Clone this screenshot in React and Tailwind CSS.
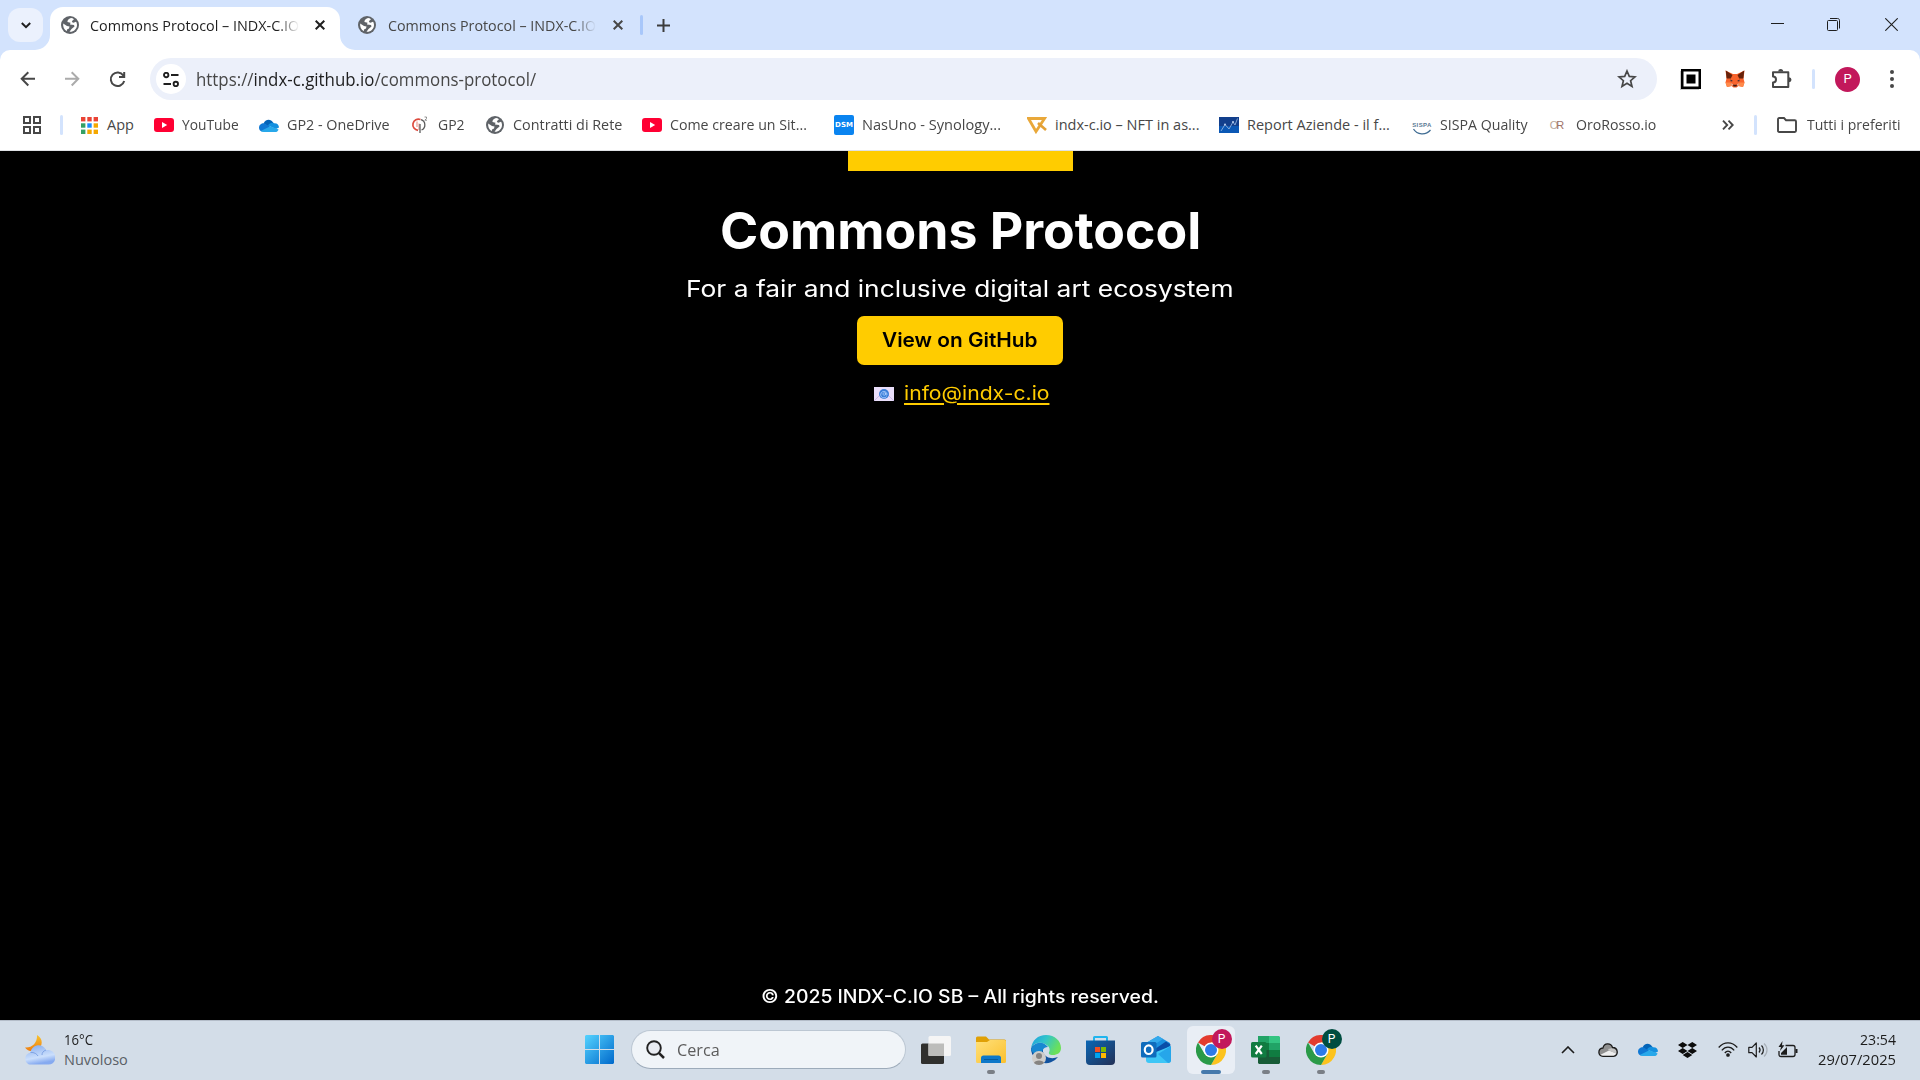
import React, { useLayoutEffect, useRef, useState } from "react";

// Stretches a single line of text to the width of its box.
function Fit({ children, className = "" }) {
  const box = useRef(null);
  const line = useRef(null);
  const [scale, setScale] = useState(1);
  useLayoutEffect(() => {
    setScale(box.current.offsetWidth / line.current.offsetWidth);
  }, [children]);
  return (
    <span ref={box} className={`block shrink-0 whitespace-nowrap ${className}`}>
      <span ref={line} className="inline-block origin-left" style={{ transform: `scaleX(${scale})` }}>
        {children}
      </span>
    </span>
  );
}

const Globe = () => (
  <svg viewBox="0 0 18 18" className="size-[18px]">
    <circle cx="9" cy="9" r="9" fill="#5f6368" />
    <path
      fill="#fff"
      d="M10 2C7.500 3 6 4.500 6.500 6L9.500 6.800L9 8.500L13 9L13.500 10.500L10.500 13L8.500 15.800C12.500 16.200 16 13 16 9C16 7.500 15.500 6.500 15 5.800L12.500 6.800L10.800 6L11.500 4.500L13 3.200C12 2.400 11 2 10 2ZM2.200 7.400L6 10L8.500 10.500L8 12.500L6 13.500L5.800 15.200C3 13.500 1.800 10.500 2.200 7.400Z"
    />
  </svg>
);

const YouTube = () => (
  <svg viewBox="0 0 20 14" className="w-5 h-3.5">
    <rect width="20" height="14" rx="3" fill="#ff0033" />
    <path d="M8 4L13.200 7L8 10Z" fill="#fff" />
  </svg>
);

const OneDrive = () => (
  <svg viewBox="0 0 20 13" className="w-5 h-[13px]">
    <path d="M4.500 4.500C6 .5 11.500-1 14.300 3.800L10 8Z" fill="#0364b8" />
    <path d="M0 8.700C0 5.500 3 3.800 5.300 4.300L13 9L3 12.500C1.200 12 0 10.500 0 8.700Z" fill="#0f78d4" />
    <path d="M9 6.500C10.500 4 13 3.300 15.200 4.300C18.500 4.200 20 6.400 20 8.500L17 10Z" fill="#1490df" />
    <path d="M1.800 11.900L11.300 7.300L19.600 10.400C19 12 17.800 13 16 13H4.600C3.500 13 2.500 12.600 1.800 11.900Z" fill="#28a8ea" />
  </svg>
);

const Apps = () => (
  <svg viewBox="0 0 17 17" className="size-[17px]">
    {["#ea4335", "#ea4335", "#ea4335", "#34a065", "#1a8cff", "#f5a800", "#34a065", "#f5a800", "#f5a800"].map((c, i) => (
      <rect key={i} x={(i % 3) * 6.3} y={Math.floor(i / 3) * 6.3} width="4.400" height="4.400" fill={c} />
    ))}
  </svg>
);

const Gp2 = () => (
  <svg viewBox="0 0 18 18" className="size-[18px]" fill="none">
    <path d="M9.500 3.500A5.600 5.600 0 1 0 7 14.300" stroke="#dd4b3e" strokeWidth="1.700" />
    <path d="M6 5.500V11M8 7.500V14" stroke="#e4887e" strokeWidth="1" />
    <path d="M10 3.700A5.500 5.500 0 0 1 10.500 14M9 8V17" stroke="#5c5c5c" strokeWidth="1.300" />
    <path d="M13.500 1H15.500V2.500L13.800 4.200H16" stroke="#777" strokeWidth=".8" />
  </svg>
);

const Dsm = () => (
  <span className="flex size-5 items-center justify-center rounded-[2px] bg-[#0a84f0] font-['DejaVu_Sans'] text-[7px] font-bold tracking-[0px] text-white">
    DSM
  </span>
);

const Indx = () => (
  <svg viewBox="0 0 20 17" className="w-5 h-[17px]" fill="none">
    <path d="M1.500 1.500H17.500L9 14.500Z" stroke="#e9a83a" strokeWidth="2.800" />
    <path d="M11 6L19 13" stroke="#e3a035" strokeWidth="2.600" />
  </svg>
);

const Report = () => (
  <svg viewBox="0 0 20 16" className="w-5 h-4" fill="none">
    <rect width="20" height="16" fill="#123f8c" />
    <path d="M0 9H20V16H0Z" fill="#0b58b5" />
    <path d="M2 14L6 7.500L10 12L14 5L16 8L18.500 1.500" stroke="#8fb0de" strokeWidth=".9" />
    <circle cx="6" cy="7.500" r="1" fill="#b9cfee" />
    <circle cx="14" cy="5" r="1" fill="#b9cfee" />
  </svg>
);

const Sispa = () => (
  <span className="relative flex h-5 w-5 flex-col items-center pt-[7px]">
    <span className="font-['Liberation_Sans'] text-[6px] font-bold leading-[6px] tracking-[0.4px] text-[#5b7a94]">SISPA</span>
    <svg viewBox="0 0 20 7" className="h-[7px] w-5" fill="none">
      <path d="M1.500 1C5 7 14 7.500 18.500 2" stroke="#3f6c93" strokeWidth="1.200" />
    </svg>
  </span>
);

const Oro = () => (
  <span className="pr-1 font-['Liberation_Sans'] text-[11px] leading-none tracking-[-2px] text-[#a07268]">
    <span className="text-[#c0aa98]">O</span>R
  </span>
);

const bookmarks = [
  { icon: Apps, label: "App", slot: "w-[75px]", text: "w-[27px]" },
  { icon: YouTube, label: "YouTube", slot: "w-[105px]", text: "w-[57px]" },
  { icon: OneDrive, label: "GP2 - OneDrive", slot: "w-[151px]", text: "w-[103px]" },
  { icon: Gp2, label: "GP2", slot: "w-[75px]", text: "w-[27px]" },
  { icon: Globe, label: "Contratti di Rete", slot: "w-[157px]", text: "w-[109px]" },
  { icon: YouTube, label: "Come creare un Sit...", slot: "w-[192px]", text: "w-[137px]" },
  { icon: Dsm, label: "NasUno - Synology...", slot: "w-[193px]", text: "w-[139px]" },
  { icon: Indx, label: "indx-c.io – NFT in as...", slot: "w-[192px]", text: "w-[144px]" },
  { icon: Report, label: "Report Aziende - il f...", slot: "w-[193px]", text: "w-[143px]" },
  { icon: Sispa, label: "SISPA Quality", slot: "w-[136px]", text: "w-[88px]" },
  { icon: Oro, label: "OroRosso.io", slot: "w-[173px]", text: "w-[80px]" },
];

const Cross = ({ color }) => (
  <svg viewBox="0 0 10 10" className="size-2.5 shrink-0">
    <path d="M.7.700L9.300 9.300M9.300.700L.7 9.300" stroke={color} strokeWidth="2" />
  </svg>
);

function TabStrip() {
  return (
    <header className="flex h-[50px] items-start bg-[#d3e3fd]">
      <div className="ml-2 mt-2 flex h-[34px] w-[35px] items-center justify-center rounded-xl bg-[#ebf1fd]">
        <svg viewBox="0 0 10 7" className="h-[7px] w-2.5" fill="none">
          <path d="M.8 1L5 5.200L9.200 1" stroke="#1f1f1f" strokeWidth="2" />
        </svg>
      </div>
      <div className="relative ml-[7px] mt-[7px] flex h-[43px] w-[290px] items-center rounded-t-[13px] bg-white pb-[7px] pl-[11px]">
        <svg viewBox="0 0 15 15" className="absolute bottom-0 -left-[15px] size-[15px]">
          <path d="M15 0V15H0A15 15 0 0 0 15 0Z" fill="#fff" />
        </svg>
        <svg viewBox="0 0 15 15" className="absolute bottom-0 -right-[15px] size-[15px]">
          <path d="M0 0V15H15A15 15 0 0 1 0 0Z" fill="#fff" />
        </svg>
        <Globe />
        <Fit className="ml-[11px] w-[209px] pt-px text-[14.5px] text-[#1f1f1f] [mask-image:linear-gradient(to_right,#000_90%,transparent)]">
          Commons Protocol – INDX-C.IO
        </Fit>
        <span className="ml-[16px]">
          <Cross color="#1f1f1f" />
        </span>
      </div>
      <div className="mt-[7px] flex h-9 items-center pl-[18px]">
        <Globe />
        <Fit className="ml-[12px] w-[208px] pt-px text-[14.5px] text-[#474747] [mask-image:linear-gradient(to_right,#000_90%,transparent)]">
          Commons Protocol – INDX-C.IO
        </Fit>
        <span className="ml-[17px]">
          <Cross color="#474747" />
        </span>
        <span className="ml-[17px] h-5 w-[3px] rounded bg-[#a8c7fa]" />
        <svg viewBox="0 0 13 13" className="ml-[14px] size-[13px]">
          <path d="M6.500 0V13M0 6.500H13" stroke="#3c3c3c" strokeWidth="2" />
        </svg>
      </div>
      <div className="ml-auto mr-[22px] flex h-[49px] items-center text-[#1f1f1f]">
        <svg viewBox="0 0 13 13" className="size-[13px]">
          <path d="M0 5.500H13" stroke="currentColor" />
        </svg>
        <svg viewBox="0 0 14 14" className="ml-[43px] size-[14px]" fill="none" stroke="currentColor">
          <rect x=".5" y="2.500" width="10" height="10" rx="1" />
          <path d="M3 .5H10.500C12 .5 12.500 1.500 12.500 2.500V10.500" />
        </svg>
        <svg viewBox="0 0 13 13" className="ml-11 size-[13px]">
          <path d="M.3.300L12.700 12.700M12.700.300L.3 12.700" stroke="currentColor" strokeWidth="1.100" />
        </svg>
      </div>
    </header>
  );
}

const Puzzle = () => (
  <svg viewBox="0 0 22 22" className="size-[22px]" fill="none">
    <path d="M2 4.200H17.300V19H2V14.600A3 3 0 0 0 2 8.600Z" stroke="#474747" strokeWidth="2" strokeLinejoin="round" />
    <path d="M7.200 3.500A2.500 2.500 0 0 1 12.200 3.500ZM18 9.200A2.500 2.500 0 0 1 18 14.200Z" fill="#474747" />
  </svg>
);

const Fox = () => (
  <svg viewBox="0 0 20 18" className="h-[18px] w-5">
    <path d="M.5.500L8 4H12L19.500.500L18.500 8.500L19.500 12.500L18 17L13.500 16L11.500 17.500H8.500L6.500 16L2 17L.5 12.500L1.500 8.500Z" fill="#f8632c" />
    <path d="M.8.600L7.500 5L5.800 8.500L1.600 8.600ZM19.200.600L12.500 5L14.200 8.500L18.400 8.600Z" fill="#66210a" />
    <path d="M2 17L.5 12.500H5.500L6.500 16ZM18 17L19.500 12.500H14.500L13.500 16Z" fill="#ff8a4a" />
    <path d="M5.300 9.500L8 11L5.800 11.600ZM14.700 9.500L12 11L14.200 11.600Z" fill="#2b2b38" />
    <path d="M8 14.800H12L11.500 16.500H8.500Z" fill="#3a1c16" />
    <path d="M6.500 13L8 14.800L6.500 16ZM13.500 13L12 14.800L13.500 16Z" fill="#e3c9bd" />
  </svg>
);

function Toolbar() {
  return (
    <div className="bg-[#d3e3fd]">
      <div className="flex h-[50px] items-center rounded-t-[10px] bg-white pt-2">
        <svg viewBox="0 0 16 16" className="ml-5 size-4" fill="none">
          <path d="M8.300 1.200L1.700 7.800L8.300 14.500M2 7.800H15" stroke="#474747" strokeWidth="2" />
        </svg>
        <svg viewBox="0 0 16 16" className="ml-7 size-4" fill="none">
          <path d="M7.700 1.200L14.300 7.800L7.700 14.500M14 7.800H1" stroke="#ababab" strokeWidth="2" />
        </svg>
        <svg viewBox="0 0 17 17" className="ml-[29px] size-[17px]" fill="none">
          <path d="M14.300 4.500A6.800 6.800 0 1 0 15.200 10M15.200 1V6H10" stroke="#474747" strokeWidth="2" />
        </svg>
        <div className="ml-6 flex h-[42px] w-[1507px] items-center rounded-full bg-[#ecf0fa] pl-1.5">
          <span className="flex size-[30px] items-center justify-center rounded-full bg-white">
            <svg viewBox="0 0 16 15" className="h-[15px] w-4" fill="none" stroke="#1f1f1f" strokeWidth="1.900">
              <circle cx="3.200" cy="3" r="2.200" />
              <circle cx="12.800" cy="12" r="2.200" />
              <path d="M8 3H15.500M.5 12H8" />
            </svg>
          </span>
          <Fit className="ml-[10px] w-[340px] pt-px text-[18px] text-[#474747]">
            https://<span className="text-[#1f1f1f]">indx-c.github.io</span>/commons-protocol/
          </Fit>
          <svg viewBox="0 0 20 20" className="ml-auto mr-[20px] size-5" fill="none">
            <path d="M10 2L12.300 7.400L18 7.900L13.600 11.700L15 17.400L10 14.300L5 17.400L6.400 11.700L2 7.900L7.700 7.400Z" stroke="#474747" strokeWidth="1.700" />
          </svg>
        </div>
        <svg viewBox="0 0 21 21" className="ml-[23px] size-[21px]">
          <path d="M0 2H19V21H0Z" fill="#c9c9c9" />
          <rect x="1" y="0" width="20" height="20" fill="#000" />
          <rect x="3.500" y="2.500" width="15" height="15" fill="#fff" />
          <rect x="6.500" y="5.500" width="9" height="9" fill="#000" />
        </svg>
        <span className="ml-6">
          <Fox />
        </span>
        <span className="ml-[26px]">
          <Puzzle />
        </span>
        <span className="ml-[19px] h-5 w-[3px] rounded bg-[#d3e3fd]" />
        <span className="ml-5 flex size-[25px] items-center justify-center rounded-full bg-[#c2185b] font-['Roboto'] text-[13px] text-white">P</span>
        <svg viewBox="0 0 4 18" className="ml-[30px] h-[18px] w-1" fill="#474747">
          <circle cx="2" cy="2" r="2" />
          <circle cx="2" cy="9" r="2" />
          <circle cx="2" cy="16" r="2" />
        </svg>
      </div>
    </div>
  );
}

function BookmarksBar() {
  return (
    <nav className="flex h-[51px] items-center border-b border-[#dfe1e5] bg-white text-[14.5px] text-[#474747]">
      <svg viewBox="0 0 18 18" className="ml-[23px] size-[18px]" fill="none" stroke="#474747" strokeWidth="2">
        <path d="M1 1H7V7H1ZM11 1H17V7H11ZM1 11H7V17H1ZM11 11H17V17H11Z" />
      </svg>
      <span className="ml-[19px] mr-[16px] h-5 w-[3px] rounded bg-[#d3e3fd]" />
      {bookmarks.map(({ icon: Icon, label, slot, text }) => (
        <div key={label} className={`flex shrink-0 items-center ${slot}`}>
          <span className="mr-2 flex size-5 shrink-0 items-center justify-center">
            <Icon />
          </span>
          <Fit className={`pb-px ${text}`}>{label}</Fit>
        </div>
      ))}
      <svg viewBox="0 0 12 10" className="ml-px h-2.5 w-3" fill="none" stroke="#474747" strokeWidth="1.900">
        <path d="M1 .7L5.200 5L1 9.300M6.500.700L10.700 5L6.500 9.300" />
      </svg>
      <span className="ml-[20px] h-5 w-[3px] rounded bg-[#d3e3fd]" />
      <svg viewBox="0 0 20 16" className="ml-5 h-4 w-5" fill="none">
        <path d="M1 2.200Q1 1 2.200 1H7L9 3.200H17.800Q19 3.200 19 4.400V13.800Q19 15 17.800 15H2.200Q1 15 1 13.800Z" stroke="#474747" strokeWidth="1.900" />
      </svg>
      <Fit className="ml-[10px] w-[93px] pb-px">Tutti i preferiti</Fit>
    </nav>
  );
}

function Page() {
  return (
    <main className="flex h-[869px] flex-col items-center bg-black font-['Inter',sans-serif] text-white">
      <div className="h-5 w-[225px] bg-[#ffcc00]" />
      <h1 className="mt-[29px] text-[51px] font-bold leading-[62px]">
        <Fit className="w-[481px]">Commons Protocol</Fit>
      </h1>
      <p className="mt-[10px] text-[23px] leading-[34px]">
        <Fit className="w-[548px]">For a fair and inclusive digital art ecosystem</Fit>
      </p>
      <a className="mt-2.5 flex h-[49px] w-[206px] items-center justify-center rounded-[7px] bg-[#ffcc00] pb-px text-[20px] font-semibold text-black">
        <Fit className="w-[156px]">View on GitHub</Fit>
      </a>
      <div className="mt-[15px] flex h-[28px] items-center pl-1">
        <svg viewBox="0 0 20 14" className="w-5 h-3.5">
          <rect width="20" height="14" fill="#e9defa" />
          <path d="M0 14L7 7M20 14L13 7" stroke="#cdbbe8" />
          <circle cx="10" cy="7" r="5" fill="#3b7fd9" />
          <path d="M12.500 9.500A3.200 3.200 0 1 1 13 7C13 8.600 11.600 8.500 11.600 7.500V5.500" stroke="#b8d4ff" strokeWidth=".8" fill="none" />
          <circle cx="10.200" cy="7" r="1.300" stroke="#b8d4ff" strokeWidth=".7" fill="none" />
        </svg>
        <Fit className="ml-2.5 w-[146px] text-[19px] leading-[28px] text-[#ffcc00]">
          <span className="underline decoration-[1.500px] underline-offset-[3px]">info@indx-c.io</span>
        </Fit>
      </div>
      <footer className="mb-[11px] mt-auto text-[18px] font-medium leading-6">
        <Fit className="w-[398px]">© 2025 INDX-C.IO SB – All rights reserved.</Fit>
      </footer>
    </main>
  );
}

const Weather = () => (
  <svg viewBox="0 0 30 30" className="size-[30px]">
    <defs>
      <linearGradient id="moon" x1="0" y1="0" x2="0" y2="1">
        <stop offset="0" stopColor="#f8c32c" />
        <stop offset="1" stopColor="#ee7d12" />
      </linearGradient>
      <linearGradient id="cloud" x1="0" y1="0" x2=".3" y2="1">
        <stop offset="0" stopColor="#84abee" />
        <stop offset=".7" stopColor="#cbdffc" />
        <stop offset="1" stopColor="#86aaf0" />
      </linearGradient>
    </defs>
    <path d="M12 0C18 3 19 12 11 15.500C7 17 2 16 0 12.500C7 13 12.500 8 12 0Z" fill="url(#moon)" />
    <path d="M6 29.500C-1 29.500-2 19 5.500 17.500C6.500 9 18 7.500 21 15C33 13.500 33 29.500 23.500 29.500Z" fill="url(#cloud)" />
    <path d="M5.500 17.500C9 17 12 19 13 21M21 15C18 16 17 18 17 20" stroke="#7fa3e4" fill="none" />
  </svg>
);

const Windows = () => (
  <svg viewBox="0 0 29 29" className="size-[29px]">
    <linearGradient id="win" x1="0" y1="0" x2="29" y2="29" gradientUnits="userSpaceOnUse">
      <stop offset="0" stopColor="#55d3ff" />
      <stop offset="1" stopColor="#0069cb" />
    </linearGradient>
    <path d="M1 0H14V14H0V1ZM15 0H28L29 1V14H15ZM0 15H14V29H1L0 28ZM15 15H29V28L28 29H15Z" fill="url(#win)" />
  </svg>
);

const TaskView = () => (
  <svg viewBox="0 0 30 28" className="h-7 w-[30px]">
    <rect x="0" y="7.500" width="23" height="20.500" rx="1.500" fill="#30302e" />
    <rect x="7.500" y="0" width="22.500" height="20" rx="1.500" fill="#f5f5f5" />
    <path d="M7.500 7.500H23V20H7.500Z" fill="#bdbdbb" />
  </svg>
);

const Explorer = () => (
  <svg viewBox="0 0 30 28" className="h-7 w-[30px]">
    <linearGradient id="fold" x1="0" y1="0" x2="1" y2="1">
      <stop offset="0" stopColor="#ffe07a" />
      <stop offset="1" stopColor="#fbc02d" />
    </linearGradient>
    <path d="M0 2Q0 .5 1.500.500H10L13 3.500H28.500Q30 3.500 30 5V10H0Z" fill="#e0a005" />
    <path d="M0 6H11L14 4H28.500Q30 4 30 5.500V25.500Q30 27 28.500 27H1.500Q0 27 0 25.500Z" fill="url(#fold)" />
    <path d="M5 27V22Q5 19.500 7.500 19.500H22.500Q25 19.500 25 22V27Z" fill="#0e78c9" />
    <path d="M8 23.500H22" stroke="#075a9c" strokeWidth="1" />
  </svg>
);

const Edge = () => (
  <svg viewBox="0 0 30 30" className="size-[30px]">
    <defs>
      <linearGradient id="edgeTop" x1="0" y1="0" x2="1" y2=".4">
        <stop offset="0" stopColor="#1b9de2" />
        <stop offset=".5" stopColor="#32c5c9" />
        <stop offset="1" stopColor="#6be05a" />
      </linearGradient>
    </defs>
    <path d="M27 22A15 15 0 0 1 0 15C0 9 8 8 12 10L12 17C15 24 22 24 27 22Z" fill="#10529f" />
    <path d="M0 14C1 5 7 0 15 0C24 0 30 6 30 13C30 18 26 20 22 20C18 20 17 18.500 18.500 16C19.500 12 16 9.500 11 8C6 7 1 10 0 14Z" fill="url(#edgeTop)" />
    <path d="M0 15C2 7 12 5 17 12C12 12 10 17 11 21C6 20 2 19 0 15Z" fill="#1788d1" />
    <circle cx="8" cy="23" r="7" fill="#cfcdca" />
    <circle cx="8" cy="21" r="3" fill="#858381" />
    <path d="M3 28C3.500 24.500 12.500 24.500 13 28C10.500 30.500 5.500 30.500 3 28Z" fill="#858381" />
  </svg>
);

const Store = () => (
  <svg viewBox="0 0 29 30" className="h-[30px] w-[29px]">
    <linearGradient id="store" x1="0" y1="0" x2="1" y2="1">
      <stop offset="0" stopColor="#0b67b5" />
      <stop offset="1" stopColor="#233056" />
    </linearGradient>
    <path d="M8 6V2.500Q8 2 8.500 2H20.500Q21 2 21 2.500V6" stroke="#21b5ee" strokeWidth="2" fill="none" />
    <path d="M0 5.500H29V26Q29 30 25 30H4Q0 30 0 26Z" fill="url(#store)" />
    <path d="M9 12H14V17H9Z" fill="#f25022" />
    <path d="M15 12H20V17H15Z" fill="#7fba00" />
    <path d="M9 18H14V23H9Z" fill="#00a4ef" />
    <path d="M15 18H20V23H15Z" fill="#ffb900" />
  </svg>
);

const Outlook = () => (
  <svg viewBox="0 0 30 27" className="h-[27px] w-[30px]">
    <path d="M5 7L17 0L29 7V12L10 22H5Z" fill="#1b91e0" />
    <path d="M5 7L17 0L22 3L8 12Z" fill="#34a9ec" />
    <path d="M14 13L25 5.500L30 9L15 19Z" fill="#0a4ea8" />
    <path d="M30 10V24Q30 27 27 27H8Q5 27 5 24V20Z" fill="#3dc6f6" />
    <path d="M30 10L17 18L27 27Q30 27 30 24Z" fill="#26a6ea" />
    <rect x="0" y="6" width="15.500" height="15.500" rx="1.500" fill="#0f6cbd" />
    <ellipse cx="7.700" cy="13.700" rx="3.900" ry="4.300" stroke="#fff" strokeWidth="2.200" fill="none" />
  </svg>
);

const Chrome = ({ badge }) => (
  <span className="relative block size-[30px]">
    <svg viewBox="0 0 30 30" className="size-[30px]">
      <path d="M15 15L2 7.500A15 15 0 0 1 28 7.500H15Z" fill="#e33b2e" />
      <path d="M15 7.500H28A15 15 0 0 1 15 30L21.500 18.800Z" fill="#fcc31e" />
      <path d="M2 7.500A15 15 0 0 0 15 30L21.500 18.800L15 15L8.500 18.800Z" fill="#2a9a48" />
      <circle cx="15" cy="15" r="7.500" fill="#fff" />
      <circle cx="15" cy="15" r="6" fill="#2d7be8" />
    </svg>
    <span className={`absolute -top-[6px] left-4 flex size-5 items-center justify-center rounded-full font-['Roboto'] text-[12px] text-white ${badge}`}>P</span>
  </span>
);

const Excel = () => (
  <svg viewBox="0 0 30 28" className="h-7 w-[30px]">
    <path d="M7 0H18V14H7Z" fill="#21a366" />
    <path d="M18 0H28L29 1V7H18Z" fill="#33c481" />
    <path d="M18 7H29V14H18Z" fill="#21a366" />
    <path d="M7 7H18V14H7Z" fill="#107c41" />
    <path d="M7 14H29V27L28 28H8L7 27Z" fill="#185c37" />
    <path d="M18 14H29V21H18Z" fill="#107c41" />
    <rect x="0" y="6" width="15.500" height="15.500" rx="1.500" fill="#107c41" />
    <path d="M4.700 9.700L10.800 18M10.800 9.700L4.700 18" stroke="#fff" strokeWidth="2.200" />
  </svg>
);

const apps = [
  { icon: <TaskView /> },
  { icon: <Explorer />, mark: "w-2 bg-[#7a7f86]" },
  { icon: <Edge /> },
  { icon: <Store /> },
  { icon: <Outlook /> },
  { icon: <Chrome badge="bg-[#c2185b]" />, mark: "w-5 bg-[#4579ac]", active: true },
  { icon: <Excel />, mark: "w-2 bg-[#7a7f86]" },
  { icon: <Chrome badge="bg-[#004d40]" />, mark: "w-2 bg-[#7a7f86]" },
];

function Tray() {
  return (
    <div className="ml-auto mr-6 flex items-center">
      <svg viewBox="0 0 14 8" className="h-2 w-3.5" fill="none">
        <path d="M1 7L7 1L13 7" stroke="#1c1c1c" strokeWidth="1.600" />
      </svg>
      <svg viewBox="0 0 20 14" className="ml-[23px] h-3.5 w-5">
        <path d="M5 13.300C-.5 13.300-.5 5.500 5 5C6-.5 13-.5 14.500 4.500C20.500 4.500 20.800 13.300 15.500 13.300Z" fill="#8f8f8f" />
        <path d="M2 12L11 7.500L18.500 10.500L16 13H4Z" fill="#eee" />
        <path d="M10 6L15 5L19 8L18 10.500L11 7.500Z" fill="#c4c4c4" />
        <path d="M5 13.300C-.5 13.300-.5 5.500 5 5C6-.5 13-.5 14.500 4.500C20.500 4.500 20.800 13.300 15.500 13.300Z" stroke="#1b1b1b" strokeWidth="1.300" fill="none" />
      </svg>
      <span className="ml-5">
        <OneDrive />
      </span>
      <svg viewBox="0 0 19 16" className="ml-5 h-4 w-[19px]" fill="#0c0c0c">
        <path d="M4.700 0L9.500 3L4.700 6L0 3ZM14.300 0L19 3L14.300 6L9.500 3ZM4.700 6L9.500 9L4.700 12L0 9ZM14.300 6L19 9L14.300 12L9.500 9ZM9.500 10L14.300 13L9.500 16L4.700 13Z" />
      </svg>
      <svg viewBox="0 0 20 15" className="ml-[21px] h-[15px] w-5" fill="none" stroke="#1c1c1c" strokeWidth="1.300">
        <path d="M.7 5.500C6-.6 14-.6 19.300 5.500M3.800 8.300C7.500 4 12.500 4 16.200 8.300M6.800 11C8.800 8.600 11.200 8.600 13.200 11" />
        <circle cx="10" cy="13" r="1.200" fill="#1c1c1c" />
      </svg>
      <svg viewBox="0 0 20 16" className="ml-2.5 h-4 w-5" fill="none" stroke="#1c1c1c" strokeWidth="1.200">
        <path d="M.8 5.300H4L8.300 1V15L4 10.700H.8Z" strokeLinejoin="round" />
        <path d="M11 5.500C12.300 7 12.300 9 11 10.500M13.500 3.500C16 6 16 10 13.500 12.500" />
        <path d="M16 1.500C20 5 20 11 16 14.500" stroke="#a9b0b8" />
      </svg>
      <svg viewBox="0 0 20 17" className="ml-2.5 h-[17px] w-5" fill="none">
        <path d="M7.500 4.500H15Q17 4.500 17 6.500V13.500Q17 15.500 15 15.500H3Q1 15.500 1 13.500V10" stroke="#1c1c1c" strokeWidth="1.300" />
        <path d="M17.500 8H19.500V12H17.500ZM3 13.700V12L9 6V13.700Z" fill="#1c1c1c" />
        <path d="M4.500 0L.5 6H3L2 10L6.500 4.300H4Z" fill="#1c1c1c" />
      </svg>
      <div className="ml-[20px] flex w-[78px] flex-col items-end text-[14.5px] leading-5 text-[#1c1c1c]">
        <Fit className="w-9">23:54</Fit>
        <Fit className="w-[78px]">29/07/2025</Fit>
      </div>
    </div>
  );
}

function Taskbar() {
  return (
    <footer className="flex h-[60px] items-center border-t border-[#b4bdc9] bg-[#d3dde8] pb-[2px]">
      <div className="flex w-[572px] items-center pl-[25px]">
        <Weather />
        <div className="ml-[9px] text-[14.5px] leading-5">
          <Fit className="w-[29px] text-[#1c1c1c]">16°C</Fit>
          <Fit className="w-[64px] text-[#5a5f66]">Nuvoloso</Fit>
        </div>
      </div>
      <div className="flex w-[59px] items-center pl-[13px]">
        <Windows />
      </div>
      <div className="flex h-[39px] w-[275px] items-center rounded-full border border-[#bcc7d3] border-b-[#9dabba] bg-[#f0f4f8] pl-[14px]">
        <svg viewBox="0 0 19 19" className="size-[19px]" fill="none">
          <circle cx="8" cy="8" r="6.800" stroke="#222" strokeWidth="1.900" fill="#e9ecf2" />
          <path d="M12.800 12.800L18 18" stroke="#222" strokeWidth="2.500" />
        </svg>
        <Fit className="ml-[12px] w-[43px] text-[17px] text-[#5c5c5c]">Cerca</Fit>
      </div>
      <div className="ml-[2px] flex">
        {apps.map(({ icon, mark, active }, i) => (
          <div key={i} className="flex w-[55px] justify-center">
            <div className={`relative flex h-12 w-12 items-center justify-center rounded-md ${active ? "bg-[#e9eef5]" : ""}`}>
              {icon}
              {mark && <span className={`absolute bottom-0 h-1 rounded-full ${mark}`} />}
            </div>
          </div>
        ))}
      </div>
      <Tray />
    </footer>
  );
}

export default function App() {
  return (
    <div className="h-[1080px] w-[1920px] overflow-hidden bg-white font-['Open_Sans','Noto_Sans',sans-serif]">
      <TabStrip />
      <Toolbar />
      <BookmarksBar />
      <Page />
      <Taskbar />
    </div>
  );
}
